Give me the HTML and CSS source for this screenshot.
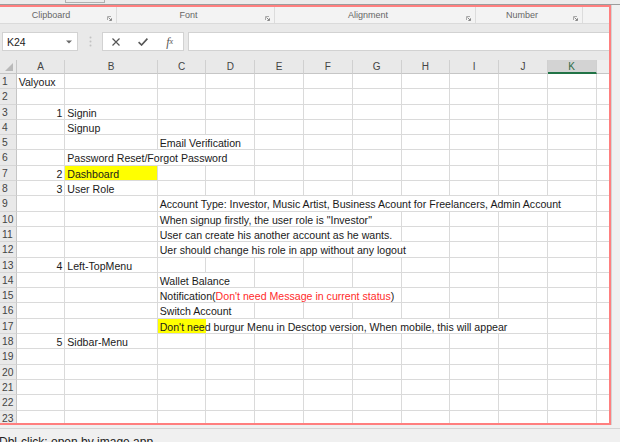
FILE: index.html
```html
<!DOCTYPE html>
<html>
<head>
<meta charset="utf-8">
<link rel="stylesheet" href="styles.css">
</head>
<body>
<div class="top"><div class="top-box"></div></div>
<div class="topline"></div>
<div class="main">
  <div class="frame">
    <div class="ribbon">
      <div class="group g1"><div class="glabel">Clipboard</div><div class="launch"><svg width="5" height="5" viewBox="0 0 5 5"><path d="M0.5 4 V0.5 H4" stroke="#aaa" fill="none"/><path d="M1.5 1.5 L4.3 4.3 M2.3 4.5 H4.5 V2.3" stroke="#888" fill="none"/></svg></div></div>
      <div class="group g2"><div class="glabel">Font</div><div class="launch"><svg width="5" height="5" viewBox="0 0 5 5"><path d="M0.5 4 V0.5 H4" stroke="#aaa" fill="none"/><path d="M1.5 1.5 L4.3 4.3 M2.3 4.5 H4.5 V2.3" stroke="#888" fill="none"/></svg></div></div>
      <div class="group g3"><div class="glabel">Alignment</div><div class="launch"><svg width="5" height="5" viewBox="0 0 5 5"><path d="M0.5 4 V0.5 H4" stroke="#aaa" fill="none"/><path d="M1.5 1.5 L4.3 4.3 M2.3 4.5 H4.5 V2.3" stroke="#888" fill="none"/></svg></div></div>
      <div class="group g4"><div class="glabel">Number</div><div class="launch"><svg width="5" height="5" viewBox="0 0 5 5"><path d="M0.5 4 V0.5 H4" stroke="#aaa" fill="none"/><path d="M1.5 1.5 L4.3 4.3 M2.3 4.5 H4.5 V2.3" stroke="#888" fill="none"/></svg></div></div>
      <div class="group g5"></div>
    </div>
    <div class="fbar">
      <div class="namebox"><span>K24</span><svg width="6" height="4" viewBox="0 0 6 4"><path d="M0 0.5 H6 L3 3.5 Z" fill="#6a6a6a"/></svg></div>
      <div class="dots"><svg width="3" height="11" viewBox="0 0 3 11"><circle cx="1.5" cy="1.5" r="1" fill="#c2c2c2"/><circle cx="1.5" cy="5.5" r="1" fill="#c2c2c2"/><circle cx="1.5" cy="9.5" r="1" fill="#c2c2c2"/></svg></div>
      <div class="fbtns">
        <div class="fb"><svg width="8" height="8" viewBox="0 0 8 8"><path d="M0.5 0.5 L7.5 7.5 M7.5 0.5 L0.5 7.5" stroke="#555" stroke-width="1.2"/></svg></div>
        <div class="fb"><svg width="10" height="8" viewBox="0 0 10 8"><path d="M0.6 4.2 L3.6 7 L9.4 0.6" stroke="#555" stroke-width="1.6" fill="none"/></svg></div>
        <div class="fb fx"><span class="fxf">f</span><span class="fxx">x</span></div>
      </div>
      <div class="finput"></div>
    </div>
    <div class="sheet">
      <div class="corner"><svg width="8" height="8" viewBox="0 0 8 8"><path d="M8 0 V8 H0 Z" fill="#b9b9b9"/></svg></div>
      <div class="ch">A</div><div class="ch">B</div><div class="ch">C</div><div class="ch">D</div><div class="ch">E</div><div class="ch">F</div><div class="ch">G</div><div class="ch">H</div><div class="ch">I</div><div class="ch">J</div><div class="ch sel">K</div><div class="ch last"></div>

      <div class="rh">1</div><div class="c">Valyoux</div><div class="c"></div><div class="c"></div><div class="c"></div><div class="c"></div><div class="c"></div><div class="c"></div><div class="c"></div><div class="c"></div><div class="c"></div><div class="c"></div><div class="c last"></div>

      <div class="rh">2</div><div class="c"></div><div class="c"></div><div class="c"></div><div class="c"></div><div class="c"></div><div class="c"></div><div class="c"></div><div class="c"></div><div class="c"></div><div class="c"></div><div class="c"></div><div class="c last"></div>

      <div class="rh">3</div><div class="c r">1</div><div class="c">Signin</div><div class="c"></div><div class="c"></div><div class="c"></div><div class="c"></div><div class="c"></div><div class="c"></div><div class="c"></div><div class="c"></div><div class="c"></div><div class="c last"></div>

      <div class="rh">4</div><div class="c"></div><div class="c">Signup</div><div class="c"></div><div class="c"></div><div class="c"></div><div class="c"></div><div class="c"></div><div class="c"></div><div class="c"></div><div class="c"></div><div class="c"></div><div class="c last"></div>

      <div class="rh">5</div><div class="c"></div><div class="c"></div><div class="c s2">Email Verification</div><div class="c"></div><div class="c"></div><div class="c"></div><div class="c"></div><div class="c"></div><div class="c"></div><div class="c"></div><div class="c last"></div>

      <div class="rh">6</div><div class="c"></div><div class="c s3">Password Reset/Forgot Password</div><div class="c"></div><div class="c"></div><div class="c"></div><div class="c"></div><div class="c"></div><div class="c"></div><div class="c"></div><div class="c last"></div>

      <div class="rh">7</div><div class="c r">2</div><div class="c y">Dashboard</div><div class="c"></div><div class="c"></div><div class="c"></div><div class="c"></div><div class="c"></div><div class="c"></div><div class="c"></div><div class="c"></div><div class="c"></div><div class="c last"></div>

      <div class="rh">8</div><div class="c r">3</div><div class="c">User Role</div><div class="c"></div><div class="c"></div><div class="c"></div><div class="c"></div><div class="c"></div><div class="c"></div><div class="c"></div><div class="c"></div><div class="c"></div><div class="c last"></div>

      <div class="rh">9</div><div class="c"></div><div class="c"></div><div class="c s9">Account Type: Investor, Music Artist, Business Acount for Freelancers, Admin Account</div><div class="c last"></div>

      <div class="rh">10</div><div class="c"></div><div class="c"></div><div class="c s5">When signup firstly, the user role is "Investor"</div><div class="c"></div><div class="c"></div><div class="c"></div><div class="c"></div><div class="c last"></div>

      <div class="rh">11</div><div class="c"></div><div class="c"></div><div class="c s5">User can create his another account as he wants.</div><div class="c"></div><div class="c"></div><div class="c"></div><div class="c"></div><div class="c last"></div>

      <div class="rh">12</div><div class="c"></div><div class="c"></div><div class="c s6">Uer should change his role in app without any logout</div><div class="c"></div><div class="c"></div><div class="c"></div><div class="c last"></div>

      <div class="rh">13</div><div class="c r">4</div><div class="c">Left-TopMenu</div><div class="c"></div><div class="c"></div><div class="c"></div><div class="c"></div><div class="c"></div><div class="c"></div><div class="c"></div><div class="c"></div><div class="c"></div><div class="c last"></div>

      <div class="rh">14</div><div class="c"></div><div class="c"></div><div class="c s2">Wallet Balance</div><div class="c"></div><div class="c"></div><div class="c"></div><div class="c"></div><div class="c"></div><div class="c"></div><div class="c"></div><div class="c last"></div>

      <div class="rh">15</div><div class="c"></div><div class="c"></div><div class="c s5">Notification(<span class="red">Don't need Message in current status</span>)</div><div class="c"></div><div class="c"></div><div class="c"></div><div class="c"></div><div class="c last"></div>

      <div class="rh">16</div><div class="c"></div><div class="c"></div><div class="c s2">Switch Account</div><div class="c"></div><div class="c"></div><div class="c"></div><div class="c"></div><div class="c"></div><div class="c"></div><div class="c"></div><div class="c last"></div>

      <div class="rh">17</div><div class="c"></div><div class="c"></div><div class="c s8 hl">Don't need burgur Menu in Desctop version, When mobile, this will appear</div><div class="c"></div><div class="c last"></div>

      <div class="rh">18</div><div class="c r">5</div><div class="c">Sidbar-Menu</div><div class="c"></div><div class="c"></div><div class="c"></div><div class="c"></div><div class="c"></div><div class="c"></div><div class="c"></div><div class="c"></div><div class="c"></div><div class="c last"></div>

      <div class="rh">19</div><div class="c"></div><div class="c"></div><div class="c"></div><div class="c"></div><div class="c"></div><div class="c"></div><div class="c"></div><div class="c"></div><div class="c"></div><div class="c"></div><div class="c"></div><div class="c last"></div>

      <div class="rh">20</div><div class="c"></div><div class="c"></div><div class="c"></div><div class="c"></div><div class="c"></div><div class="c"></div><div class="c"></div><div class="c"></div><div class="c"></div><div class="c"></div><div class="c"></div><div class="c last"></div>

      <div class="rh">21</div><div class="c"></div><div class="c"></div><div class="c"></div><div class="c"></div><div class="c"></div><div class="c"></div><div class="c"></div><div class="c"></div><div class="c"></div><div class="c"></div><div class="c"></div><div class="c last"></div>

      <div class="rh">22</div><div class="c"></div><div class="c"></div><div class="c"></div><div class="c"></div><div class="c"></div><div class="c"></div><div class="c"></div><div class="c"></div><div class="c"></div><div class="c"></div><div class="c"></div><div class="c last"></div>

      <div class="rh">23</div><div class="c"></div><div class="c"></div><div class="c"></div><div class="c"></div><div class="c"></div><div class="c"></div><div class="c"></div><div class="c"></div><div class="c"></div><div class="c"></div><div class="c"></div><div class="c last"></div>
    </div>
  </div>
  <div class="rightstrip"></div>
</div>
<div class="status">
  <div class="status-line"></div>
  <div class="status-text">Dbl-click: open by image app</div>
</div>
</body>
</html>
```

FILE: styles.css
```css
html, body {
  margin: 0;
  padding: 0;
}
body {
  width: 620px;
  height: 442px;
  overflow: hidden;
  background: #f0f0f0;
  font-family: "Liberation Sans", Arial, sans-serif;
}
.top {
  height: 4px;
  background: #ececec;
}
.top-box {
  margin-left: 65px;
  width: 40px;
  height: 3px;
  border: 1px solid #b0b0b0;
  border-top: 0;
  box-sizing: border-box;
}
.topline {
  height: 1px;
  background: #9c9c9c;
}
.main {
  display: flex;
  height: 420px;
}
.frame {
  width: 611px;
  box-sizing: border-box;
  border: 2px solid #ff7f7f;
  border-left: 0;
  display: flex;
  flex-direction: column;
  overflow: hidden;
  flex: none;
}
.rightstrip {
  flex: 1;
  background: #f0f0f0;
  border-left: 1px solid #d4d4d4;
}
.ribbon {
  height: 17px;
  flex: none;
  display: flex;
  background: #f3f3f3;
  border-bottom: 1px solid #dadada;
  box-sizing: border-box;
}
.group {
  display: flex;
  border-right: 1px solid #dcdcdc;
  box-sizing: border-box;
}
.g1 { width: 117px; }
.g2 { width: 158px; }
.g3 { width: 201px; }
.g4 { width: 107px; }
.g5 { flex: 1; border-right: 0; }
.glabel {
  flex: 1;
  text-align: center;
  font-size: 9px;
  line-height: 16px;
  color: #666;
}
.launch {
  width: 14px;
  box-sizing: border-box;
  padding-left: 5px;
  padding-top: 9px;
}
.launch svg { display: block; }
.fbar {
  height: 36px;
  flex: none;
  display: flex;
  align-items: flex-start;
  padding-top: 8px;
  box-sizing: border-box;
  background: #e9e9e9;
}
.namebox {
  margin-left: 2px;
  width: 76px;
  height: 19px;
  background: #fff;
  border: 1px solid #d2d2d2;
  box-sizing: border-box;
  display: flex;
  align-items: center;
  justify-content: space-between;
  padding: 0 5px 0 4px;
  font-size: 10.5px;
  color: #222;
}
.dots {
  width: 24px;
  height: 19px;
  display: flex;
  align-items: center;
  justify-content: center;
}
.dots svg { display: block; }
.fbtns {
  width: 82px;
  height: 19px;
  background: #fff;
  border: 1px solid #d2d2d2;
  box-sizing: border-box;
  display: flex;
  align-items: center;
}
.fb {
  width: 27px;
  display: flex;
  justify-content: center;
  align-items: center;
}
.fb svg { display: block; }
.fx {
  font-family: "Liberation Serif", "Times New Roman", serif;
  font-style: italic;
  color: #555;
  line-height: 12px;
}
.fxf { font-size: 12px; }
.fxx { font-size: 8px; }
.finput {
  margin-left: 4px;
  flex: 1;
  height: 19px;
  background: #fff;
  border: 1px solid #d2d2d2;
  border-right: 0;
  box-sizing: border-box;
}
.sheet {
  flex: 1;
  display: grid;
  grid-template-columns: 16.7px 48.6px 92.4px repeat(9, 48.78px) 1fr;
  grid-template-rows: 14px;
  grid-auto-rows: 15.3px;
  align-content: start;
  overflow: hidden;
  background: #fff;
}
.corner {
  background: #e9e9e9;
  border-right: 1px solid #c6c6c6;
  border-bottom: 1px solid #c6c6c6;
  box-sizing: border-box;
  display: flex;
  align-items: flex-end;
  justify-content: flex-end;
  padding: 0 3px 2px 0;
}
.corner svg { display: block; }
.ch {
  background: #e9e9e9;
  border-right: 1px solid #d0d0d0;
  border-bottom: 1px solid #c6c6c6;
  box-sizing: border-box;
  font-size: 10px;
  line-height: 14px;
  color: #444;
  text-align: center;
}
.ch.sel {
  background: #d3d3d3;
  border-bottom: 2px solid #217346;
  color: #2e6a45;
}
.ch.last {
  background: #efefef;
  border-right: 0;
}
.rh {
  background: #e9e9e9;
  border-right: 1px solid #c6c6c6;
  border-bottom: 1px solid #d6d6d6;
  box-sizing: border-box;
  font-size: 10.3px;
  line-height: 15px;
  padding-left: 2px;
  color: #444;
}
.c {
  border-right: 1px solid #dadada;
  border-bottom: 1px solid #dadada;
  box-sizing: border-box;
  padding: 2px 2px 0 2px;
  font-size: 10.6px;
  line-height: 13px;
  color: #1a1a1a;
  white-space: nowrap;
  overflow: visible;
}
.c.last { border-right: 0; }
.r { text-align: right; }
.y { background: #ffff00; }
.hl {
  background: linear-gradient(#ffff00, #ffff00) no-repeat;
  background-size: 48px 100%;
}
.red { color: #ff2b2b; }
.s2 { grid-column: span 2; }
.s3 { grid-column: span 3; }
.s5 { grid-column: span 5; }
.s6 { grid-column: span 6; }
.s8 { grid-column: span 8; }
.s9 { grid-column: span 9; }
.status {
  padding-top: 3px;
}
.status-line {
  border-top: 1px solid #d4d4d4;
}
.status-text {
  margin-left: -1px;
  padding-top: 6px;
  font-size: 12px;
  line-height: 14px;
  color: #222;
  white-space: nowrap;
}
```
